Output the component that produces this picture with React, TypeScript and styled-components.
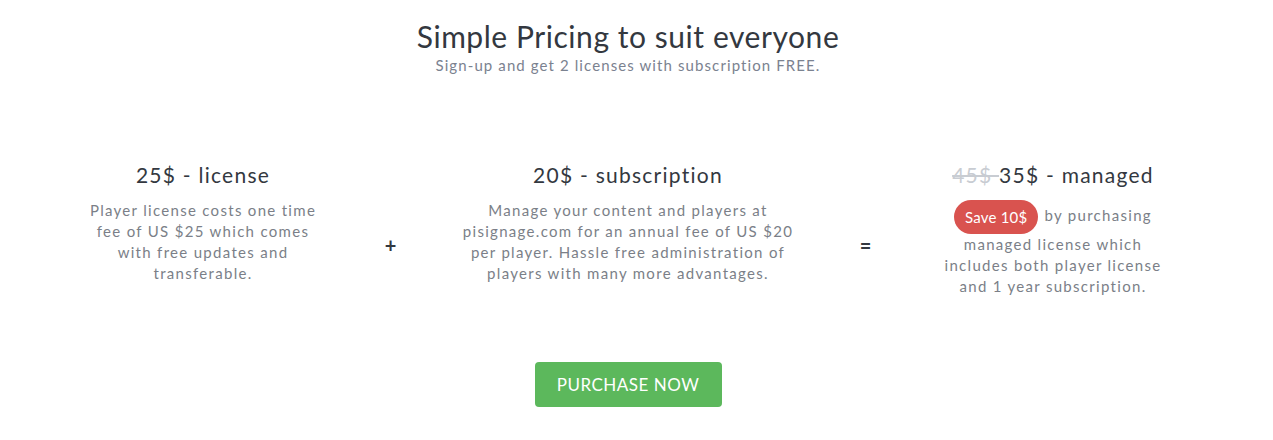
import * as React from "react";
import styled, { createGlobalStyle } from "styled-components";

const GlobalStyle = createGlobalStyle`
  body {
    margin: 0;
    background: #fff;
    font-family: Lato, "Open Sans", sans-serif;
  }
`;

export default function App() {
  return (
    <Page>
      <GlobalStyle />
      <Header>
        <Title>Simple Pricing to suit everyone</Title>
        <Subtitle>Sign-up and get 2 licenses with subscription FREE.</Subtitle>
      </Header>
      <PlanRow>
        <Plan>
          <PlanTitle>25$ - license</PlanTitle>
          <PlanText>
            Player license costs one time fee of US $25 which comes with free updates and
            transferable.
          </PlanText>
        </Plan>
        <Operator>+</Operator>
        <Plan>
          <PlanTitle>20$ - subscription</PlanTitle>
          <PlanText>
            Manage your content and players at pisignage.com for an annual fee of US $20 per
            player. Hassle free administration of players with many more advantages.
          </PlanText>
        </Plan>
        <Operator>=</Operator>
        <Plan>
          <PlanTitle>
            <OldPrice>45$ </OldPrice>35$ - managed
          </PlanTitle>
          <PlanText>
            <SaveBadge>Save 10$</SaveBadge> by purchasing managed license which includes both
            player license and 1 year subscription.
          </PlanText>
        </Plan>
      </PlanRow>
      <Actions>
        <PurchaseButton>PURCHASE NOW</PurchaseButton>
      </Actions>
    </Page>
  );
}

const Page = styled.div`
  box-sizing: border-box;
  width: 1273px;
  padding: 17px 17px 0 0;
`;

const Header = styled.header`
  text-align: center;
`;

const Title = styled.h1`
  margin: 0;
  font-size: 30px;
  font-weight: 400;
  line-height: 38px;
  color: #333840;
  letter-spacing: 0.55px;
`;

const Subtitle = styled.p`
  margin: 0;
  font-size: 15px;
  line-height: 20px;
  color: #7b8290;
  letter-spacing: 1.1px;
`;

const PlanRow = styled.section`
  display: grid;
  grid-template-columns: 232px 20px 332px 20px 232px;
  column-gap: 61.5px;
  justify-content: center;
  margin-top: 87px;
`;

const Plan = styled.div`
  text-align: center;
`;

const PlanTitle = styled.h3`
  margin: 0;
  font-size: 21px;
  font-weight: 400;
  line-height: 26px;
  color: #333840;
  letter-spacing: 1.25px;
`;

const OldPrice = styled.span`
  color: #c8ccd2;
  text-decoration: line-through;
`;

const PlanText = styled.p`
  margin: 12px 0 0;
  font-size: 15px;
  line-height: 21px;
  color: #7b7f88;
  letter-spacing: 1.3px;
`;

const SaveBadge = styled.span`
  display: inline-block;
  vertical-align: middle;
  height: 34px;
  line-height: 34px;
  padding: 0 11px;
  margin-right: 1px;
  border-radius: 17px;
  background: #d9534f;
  color: #fff;
  font-size: 15px;
  letter-spacing: 0.2px;
`;

const Operator = styled.div`
  align-self: start;
  margin-top: 71px;
  text-align: center;
  font-size: 20px;
  font-weight: 700;
  line-height: 24px;
  color: #333840;
`;

const Actions = styled.div`
  display: flex;
  justify-content: center;
  margin-top: 65px;
`;

const PurchaseButton = styled.button`
  width: 187px;
  height: 45px;
  border: none;
  border-radius: 4px;
  background: #5cb85c;
  color: #fff;
  font-family: inherit;
  font-size: 17px;
  letter-spacing: 0.5px;
  cursor: pointer;
`;
